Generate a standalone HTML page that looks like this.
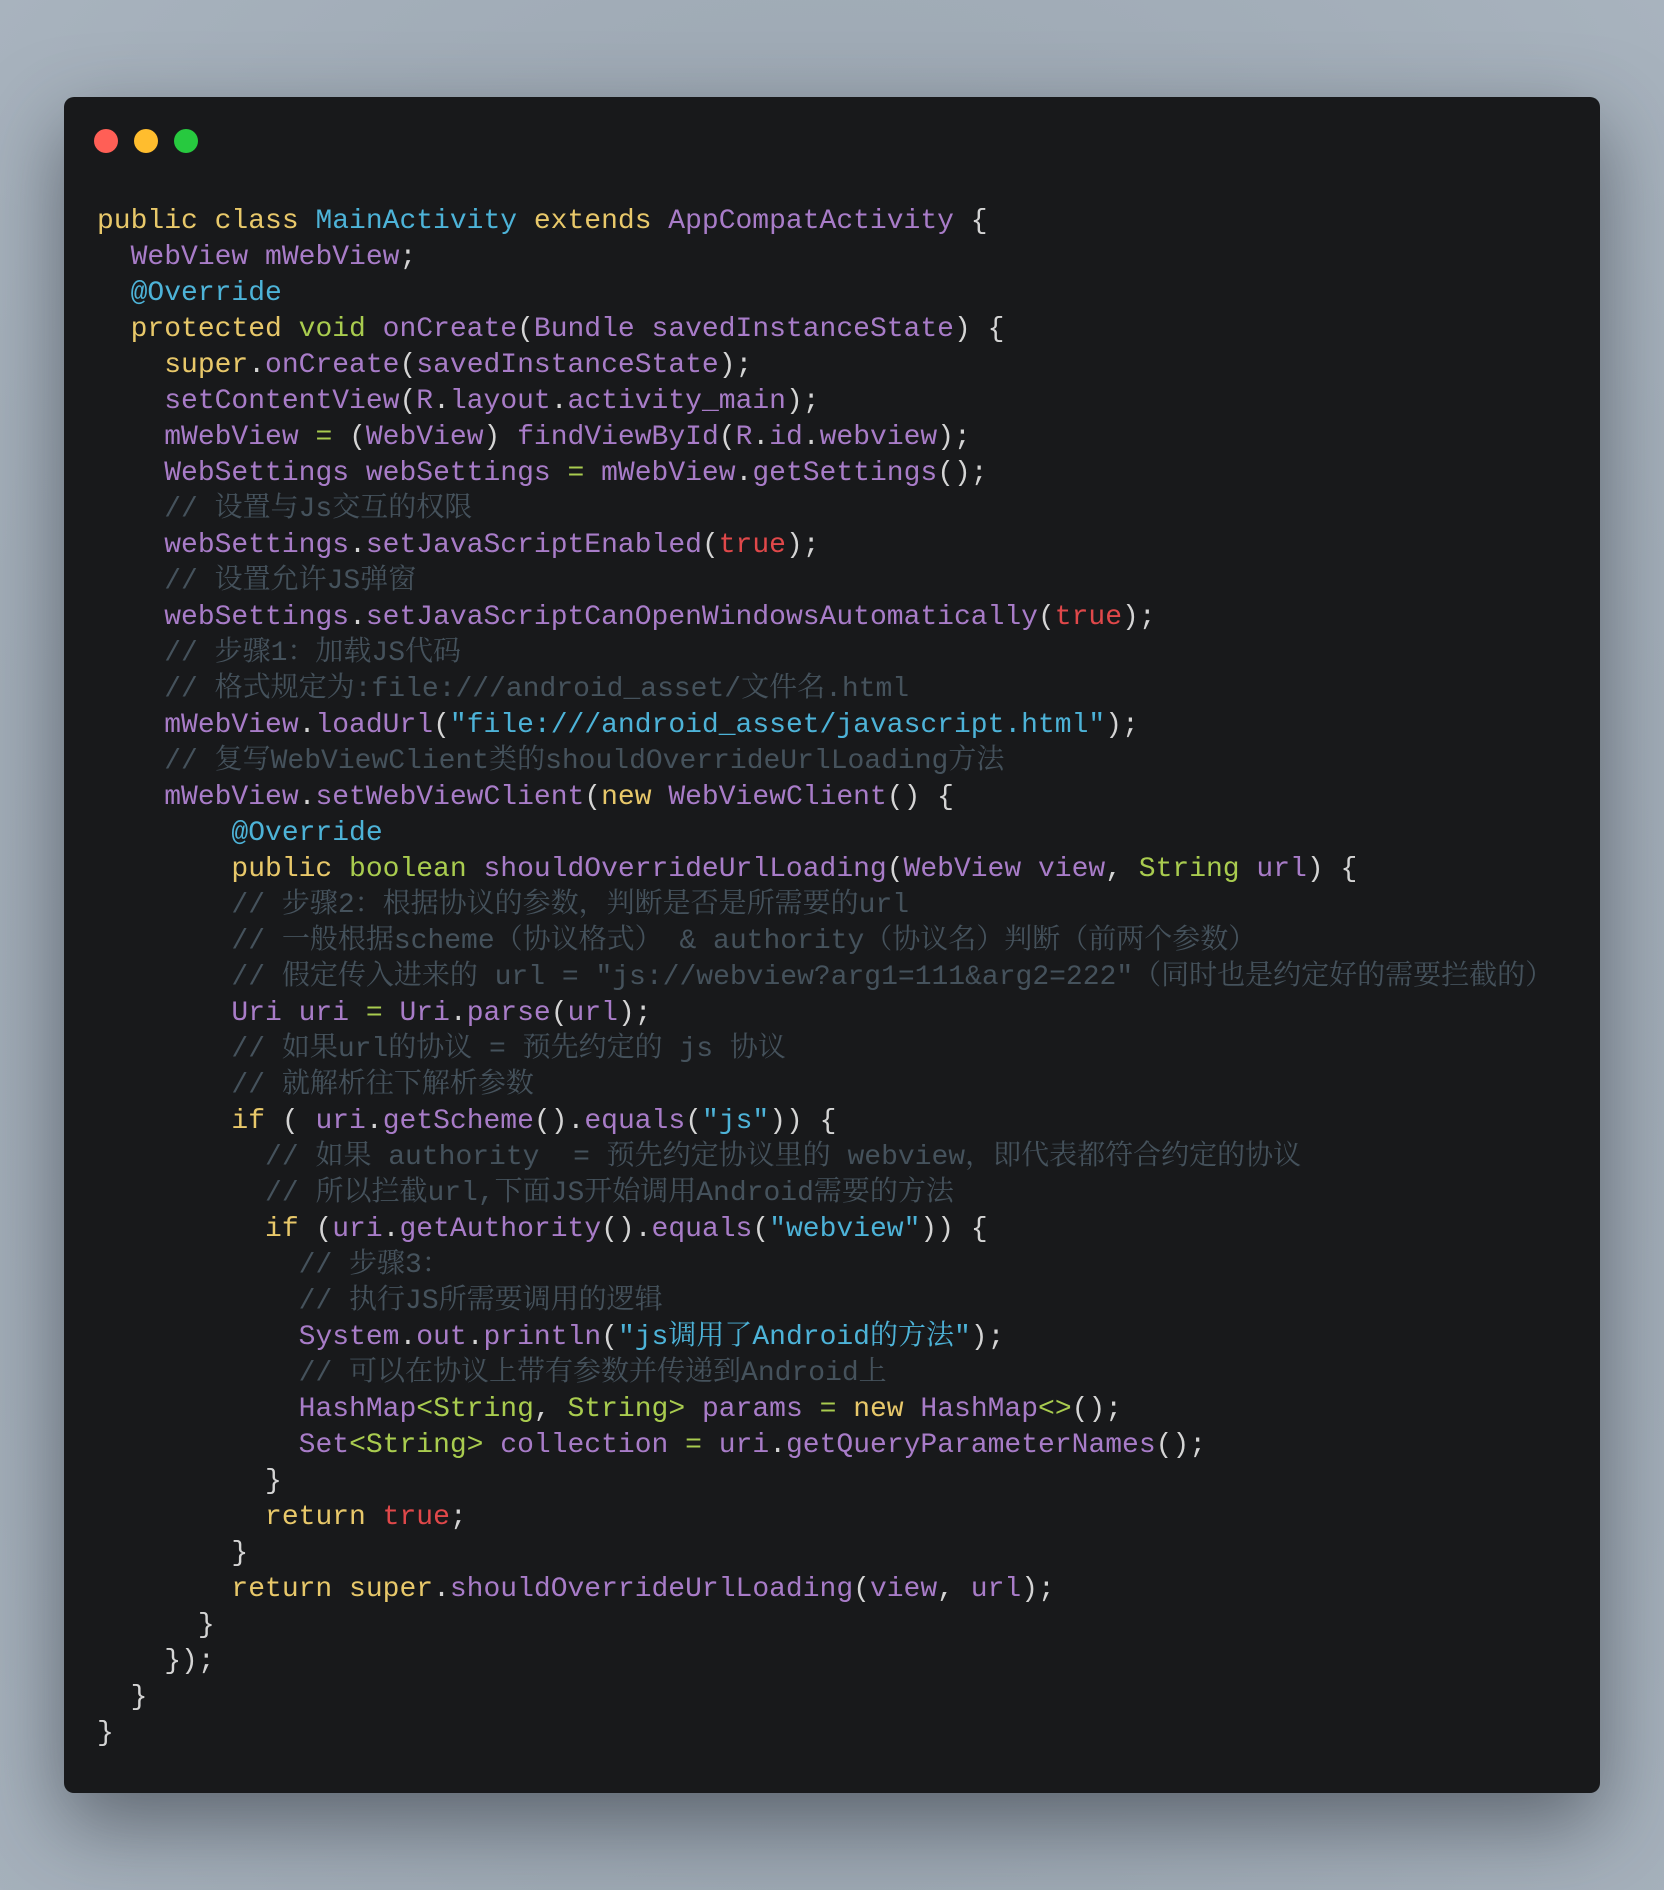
<!DOCTYPE html>
<html><head><meta charset="utf-8"><style>
html,body{margin:0;padding:0}
body{width:1664px;height:1890px;overflow:hidden;background:radial-gradient(ellipse at 50% 55%, #8e98a2 0%, #9aa5b0 45%, #a8b3be 100%);position:relative}
.win{position:absolute;left:64px;top:97px;width:1536px;height:1696px;background:#18191b;border-radius:10px;box-shadow:0 30px 80px rgba(40,45,55,.55)}
.dot{position:absolute;top:129px;width:24px;height:24px;border-radius:50%}
.code{position:absolute;left:97px;top:204px;font-family:"Liberation Mono","DejaVu Sans Mono","Noto Serif CJK SC",monospace;font-size:28px;line-height:36px;color:#d4d4d4}
.code div{height:36px;white-space:pre;overflow:visible}
.k{color:#e8c86a}.t{color:#a9cc4f}.p{color:#a87cc8}.b{color:#4db3d8}.r{color:#e0484a}.c{color:#45525c;font-family:"Liberation Mono","Noto Serif CJK SC",monospace}.g{color:#a9cc4f}
</style></head><body>
<div class="win"></div>
<div class="dot" style="left:94px;background:#ff5f56"></div>
<div class="dot" style="left:134px;background:#ffbd2e"></div>
<div class="dot" style="left:174px;background:#27c93f"></div>
<div class="code"><div><span class="k">public class </span><span class="b">MainActivity </span><span class="k">extends </span><span class="p">AppCompatActivity</span> {</div><div>  <span class="p">WebView mWebView</span>;</div><div>  <span class="b">@Override</span></div><div>  <span class="k">protected </span><span class="t">void </span><span class="p">onCreate</span>(<span class="p">Bundle savedInstanceState</span>) {</div><div>    <span class="k">super</span>.<span class="p">onCreate</span>(<span class="p">savedInstanceState</span>);</div><div>    <span class="p">setContentView</span>(<span class="p">R</span>.<span class="p">layout</span>.<span class="p">activity_main</span>);</div><div>    <span class="p">mWebView </span><span class="g">=</span> (<span class="p">WebView</span>) <span class="p">findViewById</span>(<span class="p">R</span>.<span class="p">id</span>.<span class="p">webview</span>);</div><div>    <span class="p">WebSettings webSettings </span><span class="g">=</span> <span class="p">mWebView</span>.<span class="p">getSettings</span>();</div><div>    <span class="c">// 设置与Js交互的权限</span></div><div>    <span class="p">webSettings</span>.<span class="p">setJavaScriptEnabled</span>(<span class="r">true</span>);</div><div>    <span class="c">// 设置允许JS弹窗</span></div><div>    <span class="p">webSettings</span>.<span class="p">setJavaScriptCanOpenWindowsAutomatically</span>(<span class="r">true</span>);</div><div>    <span class="c">// 步骤1：加载JS代码</span></div><div>    <span class="c">// 格式规定为:file:///android_asset/文件名.html</span></div><div>    <span class="p">mWebView</span>.<span class="p">loadUrl</span>(<span class="b">"file:///android_asset/javascript.html"</span>);</div><div>    <span class="c">// 复写WebViewClient类的shouldOverrideUrlLoading方法</span></div><div>    <span class="p">mWebView</span>.<span class="p">setWebViewClient</span>(<span class="k">new </span><span class="p">WebViewClient</span>() {</div><div>        <span class="b">@Override</span></div><div>        <span class="k">public </span><span class="t">boolean </span><span class="p">shouldOverrideUrlLoading</span>(<span class="p">WebView view</span>, <span class="t">String </span><span class="p">url</span>) {</div><div>        <span class="c">// 步骤2：根据协议的参数，判断是否是所需要的url</span></div><div>        <span class="c">// 一般根据scheme（协议格式） &amp; authority（协议名）判断（前两个参数）</span></div><div>        <span class="c">// 假定传入进来的 url = "js://webview?arg1=111&amp;arg2=222"（同时也是约定好的需要拦截的）</span></div><div>        <span class="p">Uri uri </span><span class="g">=</span> <span class="p">Uri</span>.<span class="p">parse</span>(<span class="p">url</span>);</div><div>        <span class="c">// 如果url的协议 = 预先约定的 js 协议</span></div><div>        <span class="c">// 就解析往下解析参数</span></div><div>        <span class="k">if</span> ( <span class="p">uri</span>.<span class="p">getScheme</span>().<span class="p">equals</span>(<span class="b">"js"</span>)) {</div><div>          <span class="c">// 如果 authority  = 预先约定协议里的 webview，即代表都符合约定的协议</span></div><div>          <span class="c">// 所以拦截url,下面JS开始调用Android需要的方法</span></div><div>          <span class="k">if</span> (<span class="p">uri</span>.<span class="p">getAuthority</span>().<span class="p">equals</span>(<span class="b">"webview"</span>)) {</div><div>            <span class="c">// 步骤3：</span></div><div>            <span class="c">// 执行JS所需要调用的逻辑</span></div><div>            <span class="p">System</span>.<span class="p">out</span>.<span class="p">println</span>(<span class="b">"js调用了Android的方法"</span>);</div><div>            <span class="c">// 可以在协议上带有参数并传递到Android上</span></div><div>            <span class="p">HashMap</span><span class="g">&lt;String</span>, <span class="g">String&gt;</span> <span class="p">params </span><span class="g">=</span> <span class="k">new </span><span class="p">HashMap</span><span class="g">&lt;&gt;</span>();</div><div>            <span class="p">Set</span><span class="g">&lt;String&gt;</span> <span class="p">collection </span><span class="g">=</span> <span class="p">uri</span>.<span class="p">getQueryParameterNames</span>();</div><div>          }</div><div>          <span class="k">return </span><span class="r">true</span>;</div><div>        }</div><div>        <span class="k">return super</span>.<span class="p">shouldOverrideUrlLoading</span>(<span class="p">view</span>, <span class="p">url</span>);</div><div>      }</div><div>    });</div><div>  }</div><div>}</div></div>
</body></html>
